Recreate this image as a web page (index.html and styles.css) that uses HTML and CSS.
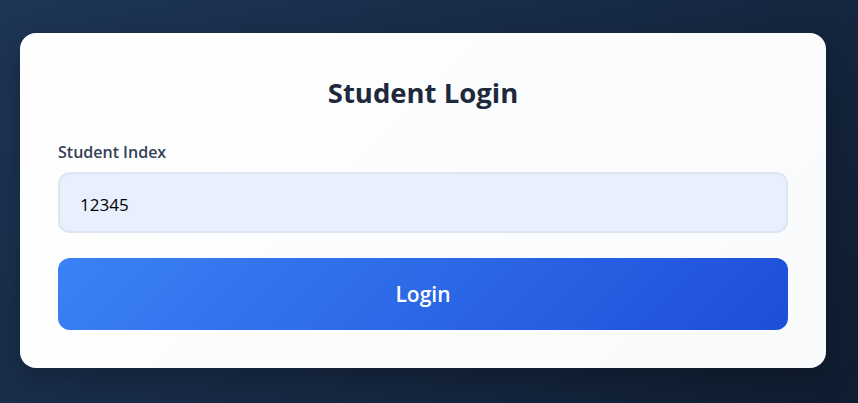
FILE: index.html
```html
<!DOCTYPE html>
<html lang="en">
<head>
<meta charset="utf-8">
<title>Student Login</title>
<link rel="stylesheet" href="styles.css">
</head>
<body>
<main class="page">
  <form class="card">
    <h1 class="title">Student Login</h1>
    <label class="label" for="idx">Student Index</label>
    <input class="input" id="idx" type="text" value="12345">
    <button class="btn" type="button">Login</button>
  </form>
</main>
</body>
</html>
```
FILE: styles.css
```css
* { box-sizing: border-box; }
html, body { margin: 0; height: 100%; }
body {
  background: linear-gradient(135deg, #1e3556 0%, #172a45 50%, #0f1d30 100%);
  font-family: "Open Sans", "Noto Sans", sans-serif;
}
.page {
  height: 403px;
  display: flex;
  align-items: flex-start;
  padding: 33px 0 0 20px;
}
.card {
  width: 806px;
  height: 335px;
  background: linear-gradient(135deg, #ffffff 0%, #f8fafc 100%);
  border-radius: 16px;
  padding: 40px 38px 38px;
  display: flex;
  flex-direction: column;
  box-shadow: 0 10px 30px rgba(0,0,0,0.25);
}
.title {
  margin: 0 0 29px;
  text-align: center;
  font-size: 27.5px;
  line-height: 40px;
  font-weight: 700;
  color: #1e293b;
}
.label {
  font-size: 16px;
  line-height: 20px;
  font-weight: 600;
  color: #334155;
  margin-bottom: 10px;
}
.input {
  height: 61px;
  border: 2px solid #dde5f0;
  border-radius: 12px;
  background: #e8f0fe;
  padding: 3px 20px 0;
  font-family: "Open Sans", "Noto Sans", sans-serif;
  font-size: 17px;
  color: #000;
  outline: none;
  margin-bottom: 25px;
}
.btn {
  height: 72px;
  border: none;
  border-radius: 12px;
  background: linear-gradient(135deg, #3b82f6 0%, #1d4ed8 100%);
  color: #fff;
  font-family: "Open Sans", "Noto Sans", sans-serif;
  font-size: 21px;
  font-weight: 600;
  cursor: pointer;
}
```
